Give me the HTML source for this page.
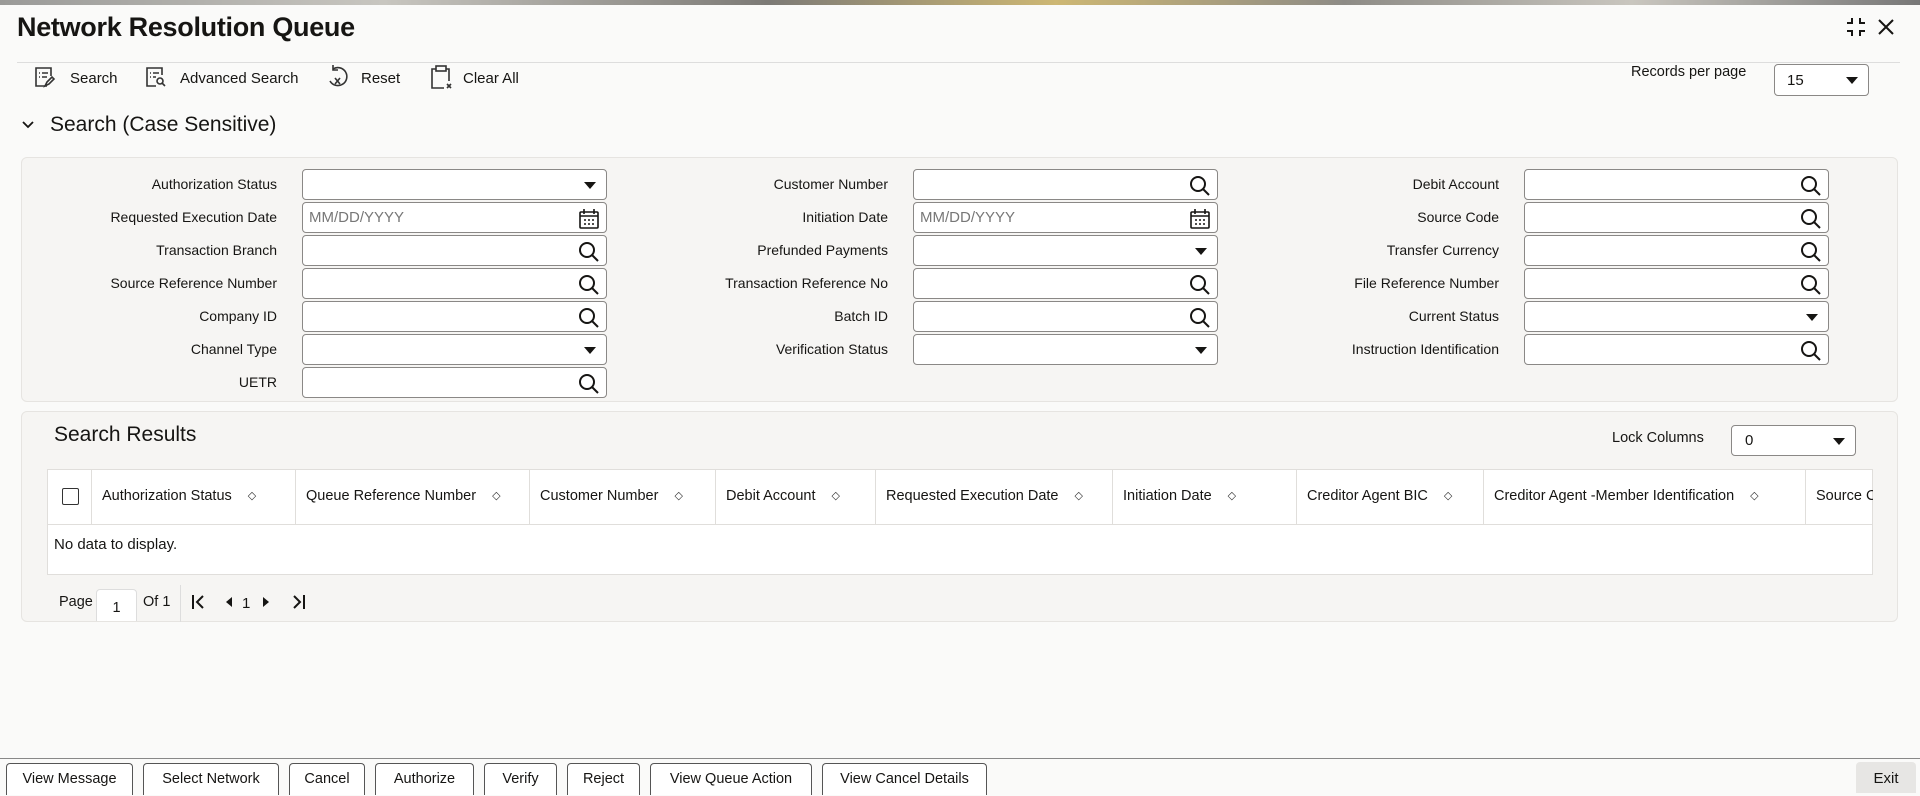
<!DOCTYPE html>
<html><head><meta charset="utf-8">
<style>
*{box-sizing:border-box;margin:0;padding:0}
body{width:1920px;height:793px;overflow:hidden;background:#fafaf9;font-family:"Liberation Sans",sans-serif;color:#161513;position:relative}
.a{position:absolute}
.strip{left:0;top:0;width:1920px;height:5px;background:linear-gradient(90deg,#9a9a98,#c8c6c0 20%,#7c7a76 40%,#cdb774 55%,#8d8b86 70%,#c9c6bf 85%,#777)}
.title{left:17px;top:12px;font-size:27px;font-weight:bold;letter-spacing:-0.3px}
.hline{left:17px;top:62px;width:1883px;height:1px;background:#ddd}
.tb{top:68px;font-size:15px;display:flex;align-items:center;gap:12px;height:20px}
.lbl{font-size:14px;text-align:right;width:260px;line-height:31px;height:31px}
.fld{height:31px;width:305px;border:1px solid #8a8886;border-radius:4px;background:#fff}
.fld .ph{position:absolute;left:6px;top:6px;font-size:15px;color:#777}
.ic{position:absolute;right:6px;top:5px}
.caret{position:absolute;right:10px;top:12px;width:0;height:0;border-left:6px solid transparent;border-right:6px solid transparent;border-top:7px solid #161513}
.panel{background:#f6f5f3;border:1px solid #e6e4e1;border-radius:6px}
.th{top:469px;height:55px;font-size:14.5px;line-height:55px;border-right:1px solid #e0dedb;padding-left:10px;white-space:nowrap;overflow:hidden}
.sort{display:inline-block;margin-left:16px;font-size:11px;color:#333;vertical-align:1px}
.btn{top:763px;height:32px;border:1px solid #555;border-bottom:none;border-radius:4px 4px 0 0;background:#fff;font-size:14.5px;text-align:center;line-height:30px}
</style></head><body>
<div class="a strip"></div>
<div class="a title">Network Resolution Queue</div>
<svg class="a" style="left:1843px;top:14px" width="26" height="26" viewBox="0 0 26 26" fill="none" stroke="#161513" stroke-width="2"><path d="M4 9h5V4M17 4v5h5M4 17h5v5M17 22v-5h5"/></svg>
<svg class="a" style="left:1877px;top:18px" width="18" height="18" viewBox="0 0 18 18" stroke="#161513" stroke-width="2"><path d="M2 2L16 16M16 2L2 16"/></svg>
<div class="a hline"></div>

<svg class="a" style="left:33px;top:65px" width="24" height="24" viewBox="0 0 24 24" fill="none" stroke="#333" stroke-width="1.6"><path d="M14 21H3V3h15v8"/><path d="M6 8h1M9 8h6M6 12h1M9 12h5"/><path d="M12 21l2-4 5-5 2 2-5 5z"/></svg>
<div class="a tb" style="left:70px">Search</div>
<svg class="a" style="left:144px;top:65px" width="24" height="24" viewBox="0 0 24 24" fill="none" stroke="#333" stroke-width="1.6"><path d="M12 21H3V3h15v7"/><path d="M6 8h1M9 8h6M6 12h1M9 12h3"/><circle cx="16" cy="16" r="3"/><path d="M18 18l3 3"/></svg>
<div class="a tb" style="left:180px">Advanced Search</div>
<svg class="a" style="left:325px;top:64px" width="26" height="26" viewBox="0 0 26 26" fill="none" stroke="#333" stroke-width="1.6"><path d="M8 5a9 9 0 1 1-3 12"/><path d="M8 1v5h5" /><path d="M10 14l5 6M15 14l-5 6"/></svg>
<div class="a tb" style="left:361px">Reset</div>
<svg class="a" style="left:429px;top:64px" width="24" height="26" viewBox="0 0 24 26" fill="none" stroke="#333" stroke-width="1.6"><path d="M7 5H3v19h12M17 5h3v12"/><rect x="7" y="2" width="10" height="5"/><path d="M18 20l4 4M22 20l-4 4"/></svg>
<div class="a tb" style="left:463px">Clear All</div>

<div class="a" style="left:1631px;top:64px;font-size:14.5px">Records per page</div>
<div class="a fld" style="left:1774px;top:64px;width:95px;height:32px"><span class="a" style="left:12px;top:7px;font-size:15px">15</span><div class="caret"></div></div>

<svg class="a" style="left:20px;top:118px" width="16" height="14" viewBox="0 0 16 14" fill="none" stroke="#161513" stroke-width="1.8"><path d="M3 4l5 5 5-5"/></svg>
<div class="a" style="left:50px;top:113px;font-size:21px">Search (Case Sensitive)</div>

<div class="a panel" style="left:21px;top:157px;width:1877px;height:245px"></div>

<!-- col 1 -->
<div class="a lbl" style="left:17px;top:169px">Authorization Status</div>
<div class="a fld" style="left:302px;top:169px"><div class="caret"></div></div>
<div class="a lbl" style="left:17px;top:202px">Requested Execution Date</div>
<div class="a fld" style="left:302px;top:202px"><span class="ph">MM/DD/YYYY</span><svg class="ic" width="22" height="22" viewBox="0 0 22 22" fill="none" stroke="#161513" stroke-width="1.6"><rect x="2" y="4" width="18" height="16" rx="1"/><path d="M6 1v5M16 1v5M2 8h18"/><path d="M6 12h2M10 12h2M14 12h2M6 16h2M10 16h2M14 16h2"/></svg></div>
<div class="a lbl" style="left:17px;top:235px">Transaction Branch</div>
<div class="a fld" style="left:302px;top:235px"><svg class="ic" width="22" height="22" viewBox="0 0 22 22" fill="none" stroke="#161513" stroke-width="2"><circle cx="9" cy="9" r="7"/><path d="M14 14l6 6"/></svg></div>
<div class="a lbl" style="left:17px;top:268px">Source Reference Number</div>
<div class="a fld" style="left:302px;top:268px"><svg class="ic" width="22" height="22" viewBox="0 0 22 22" fill="none" stroke="#161513" stroke-width="2"><circle cx="9" cy="9" r="7"/><path d="M14 14l6 6"/></svg></div>
<div class="a lbl" style="left:17px;top:301px">Company ID</div>
<div class="a fld" style="left:302px;top:301px"><svg class="ic" width="22" height="22" viewBox="0 0 22 22" fill="none" stroke="#161513" stroke-width="2"><circle cx="9" cy="9" r="7"/><path d="M14 14l6 6"/></svg></div>
<div class="a lbl" style="left:17px;top:334px">Channel Type</div>
<div class="a fld" style="left:302px;top:334px"><div class="caret"></div></div>
<div class="a lbl" style="left:17px;top:367px">UETR</div>
<div class="a fld" style="left:302px;top:367px"><svg class="ic" width="22" height="22" viewBox="0 0 22 22" fill="none" stroke="#161513" stroke-width="2"><circle cx="9" cy="9" r="7"/><path d="M14 14l6 6"/></svg></div>

<!-- col 2 -->
<div class="a lbl" style="left:628px;top:169px">Customer Number</div>
<div class="a fld" style="left:913px;top:169px"><svg class="ic" width="22" height="22" viewBox="0 0 22 22" fill="none" stroke="#161513" stroke-width="2"><circle cx="9" cy="9" r="7"/><path d="M14 14l6 6"/></svg></div>
<div class="a lbl" style="left:628px;top:202px">Initiation Date</div>
<div class="a fld" style="left:913px;top:202px"><span class="ph">MM/DD/YYYY</span><svg class="ic" width="22" height="22" viewBox="0 0 22 22" fill="none" stroke="#161513" stroke-width="1.6"><rect x="2" y="4" width="18" height="16" rx="1"/><path d="M6 1v5M16 1v5M2 8h18"/><path d="M6 12h2M10 12h2M14 12h2M6 16h2M10 16h2M14 16h2"/></svg></div>
<div class="a lbl" style="left:628px;top:235px">Prefunded Payments</div>
<div class="a fld" style="left:913px;top:235px"><div class="caret"></div></div>
<div class="a lbl" style="left:628px;top:268px">Transaction Reference No</div>
<div class="a fld" style="left:913px;top:268px"><svg class="ic" width="22" height="22" viewBox="0 0 22 22" fill="none" stroke="#161513" stroke-width="2"><circle cx="9" cy="9" r="7"/><path d="M14 14l6 6"/></svg></div>
<div class="a lbl" style="left:628px;top:301px">Batch ID</div>
<div class="a fld" style="left:913px;top:301px"><svg class="ic" width="22" height="22" viewBox="0 0 22 22" fill="none" stroke="#161513" stroke-width="2"><circle cx="9" cy="9" r="7"/><path d="M14 14l6 6"/></svg></div>
<div class="a lbl" style="left:628px;top:334px">Verification Status</div>
<div class="a fld" style="left:913px;top:334px"><div class="caret"></div></div>

<!-- col 3 -->
<div class="a lbl" style="left:1239px;top:169px">Debit Account</div>
<div class="a fld" style="left:1524px;top:169px"><svg class="ic" width="22" height="22" viewBox="0 0 22 22" fill="none" stroke="#161513" stroke-width="2"><circle cx="9" cy="9" r="7"/><path d="M14 14l6 6"/></svg></div>
<div class="a lbl" style="left:1239px;top:202px">Source Code</div>
<div class="a fld" style="left:1524px;top:202px"><svg class="ic" width="22" height="22" viewBox="0 0 22 22" fill="none" stroke="#161513" stroke-width="2"><circle cx="9" cy="9" r="7"/><path d="M14 14l6 6"/></svg></div>
<div class="a lbl" style="left:1239px;top:235px">Transfer Currency</div>
<div class="a fld" style="left:1524px;top:235px"><svg class="ic" width="22" height="22" viewBox="0 0 22 22" fill="none" stroke="#161513" stroke-width="2"><circle cx="9" cy="9" r="7"/><path d="M14 14l6 6"/></svg></div>
<div class="a lbl" style="left:1239px;top:268px">File Reference Number</div>
<div class="a fld" style="left:1524px;top:268px"><svg class="ic" width="22" height="22" viewBox="0 0 22 22" fill="none" stroke="#161513" stroke-width="2"><circle cx="9" cy="9" r="7"/><path d="M14 14l6 6"/></svg></div>
<div class="a lbl" style="left:1239px;top:301px">Current Status</div>
<div class="a fld" style="left:1524px;top:301px"><div class="caret"></div></div>
<div class="a lbl" style="left:1239px;top:334px">Instruction Identification</div>
<div class="a fld" style="left:1524px;top:334px"><svg class="ic" width="22" height="22" viewBox="0 0 22 22" fill="none" stroke="#161513" stroke-width="2"><circle cx="9" cy="9" r="7"/><path d="M14 14l6 6"/></svg></div>

<!-- results -->
<div class="a panel" style="left:21px;top:411px;width:1877px;height:211px"></div>
<div class="a" style="left:54px;top:423px;font-size:21px">Search Results</div>
<div class="a" style="left:1612px;top:430px;font-size:14.5px">Lock Columns</div>
<div class="a fld" style="left:1731px;top:425px;width:125px;height:31px"><span class="a" style="left:13px;top:6px;font-size:15px">0</span><div class="caret"></div></div>

<div class="a" style="left:47px;top:469px;width:1826px;height:106px;background:#fff;border:1px solid #e0dedb;overflow:hidden"></div>
<div class="a" style="left:47px;top:524px;width:1826px;height:1px;background:#e0dedb"></div>
<div class="a th" style="left:47px;width:45px;padding:0"><div class="a" style="left:15px;top:19px;width:17px;height:17px;border:1.5px solid #333;border-radius:2px"></div></div>
<div class="a th" style="left:92px;width:204px">Authorization Status<span class="sort">◇</span></div>
<div class="a th" style="left:296px;width:234px">Queue Reference Number<span class="sort">◇</span></div>
<div class="a th" style="left:530px;width:186px">Customer Number<span class="sort">◇</span></div>
<div class="a th" style="left:716px;width:160px">Debit Account<span class="sort">◇</span></div>
<div class="a th" style="left:876px;width:237px">Requested Execution Date<span class="sort">◇</span></div>
<div class="a th" style="left:1113px;width:184px">Initiation Date<span class="sort">◇</span></div>
<div class="a th" style="left:1297px;width:187px">Creditor Agent BIC<span class="sort">◇</span></div>
<div class="a th" style="left:1484px;width:322px">Creditor Agent -Member Identification<span class="sort">◇</span></div>
<div class="a th" style="left:1806px;width:67px;border-right:none">Source Code</div>
<div class="a" style="left:54px;top:536px;font-size:15px">No data to display.</div>

<div class="a" style="left:59px;top:594px;font-size:14.5px">Page</div>
<div class="a" style="left:96px;top:589px;width:41px;height:32px;border:1px solid #ddd;border-bottom:none;border-radius:4px 4px 0 0;background:#fff;font-size:14.5px;text-align:center;line-height:36px">1</div>
<div class="a" style="left:143px;top:594px;font-size:14.5px">Of 1</div>
<div class="a" style="left:180px;top:585px;width:1px;height:37px;background:#ddd"></div>
<svg class="a" style="left:190px;top:593px" width="120" height="18" viewBox="0 0 120 18" fill="#161513" stroke="#161513" stroke-width="2"><path d="M3 2v14M13 3l-6 6 6 6" fill="none"/><path d="M36 9l6-5v10z" stroke="none"/><text x="52" y="15" font-size="15" stroke="none" font-family="Liberation Sans">1</text><path d="M73 4l6 5-6 5z" stroke="none"/><path d="M104 3l6 6-6 6M114 2v14" fill="none"/></svg>

<!-- bottom bar -->
<div class="a" style="left:0;top:758px;width:1920px;height:1px;background:#888"></div>
<div class="a btn" style="left:6px;width:127px">View Message</div>
<div class="a btn" style="left:143px;width:136px">Select Network</div>
<div class="a btn" style="left:289px;width:76px">Cancel</div>
<div class="a btn" style="left:375px;width:99px">Authorize</div>
<div class="a btn" style="left:484px;width:73px">Verify</div>
<div class="a btn" style="left:567px;width:73px">Reject</div>
<div class="a btn" style="left:650px;width:162px">View Queue Action</div>
<div class="a btn" style="left:822px;width:165px">View Cancel Details</div>
<div class="a" style="left:1856px;top:762px;width:60px;height:31px;background:#e7e6e4;border-radius:4px 4px 0 0;font-size:15px;text-align:center;line-height:34px">Exit</div>
</body></html>
